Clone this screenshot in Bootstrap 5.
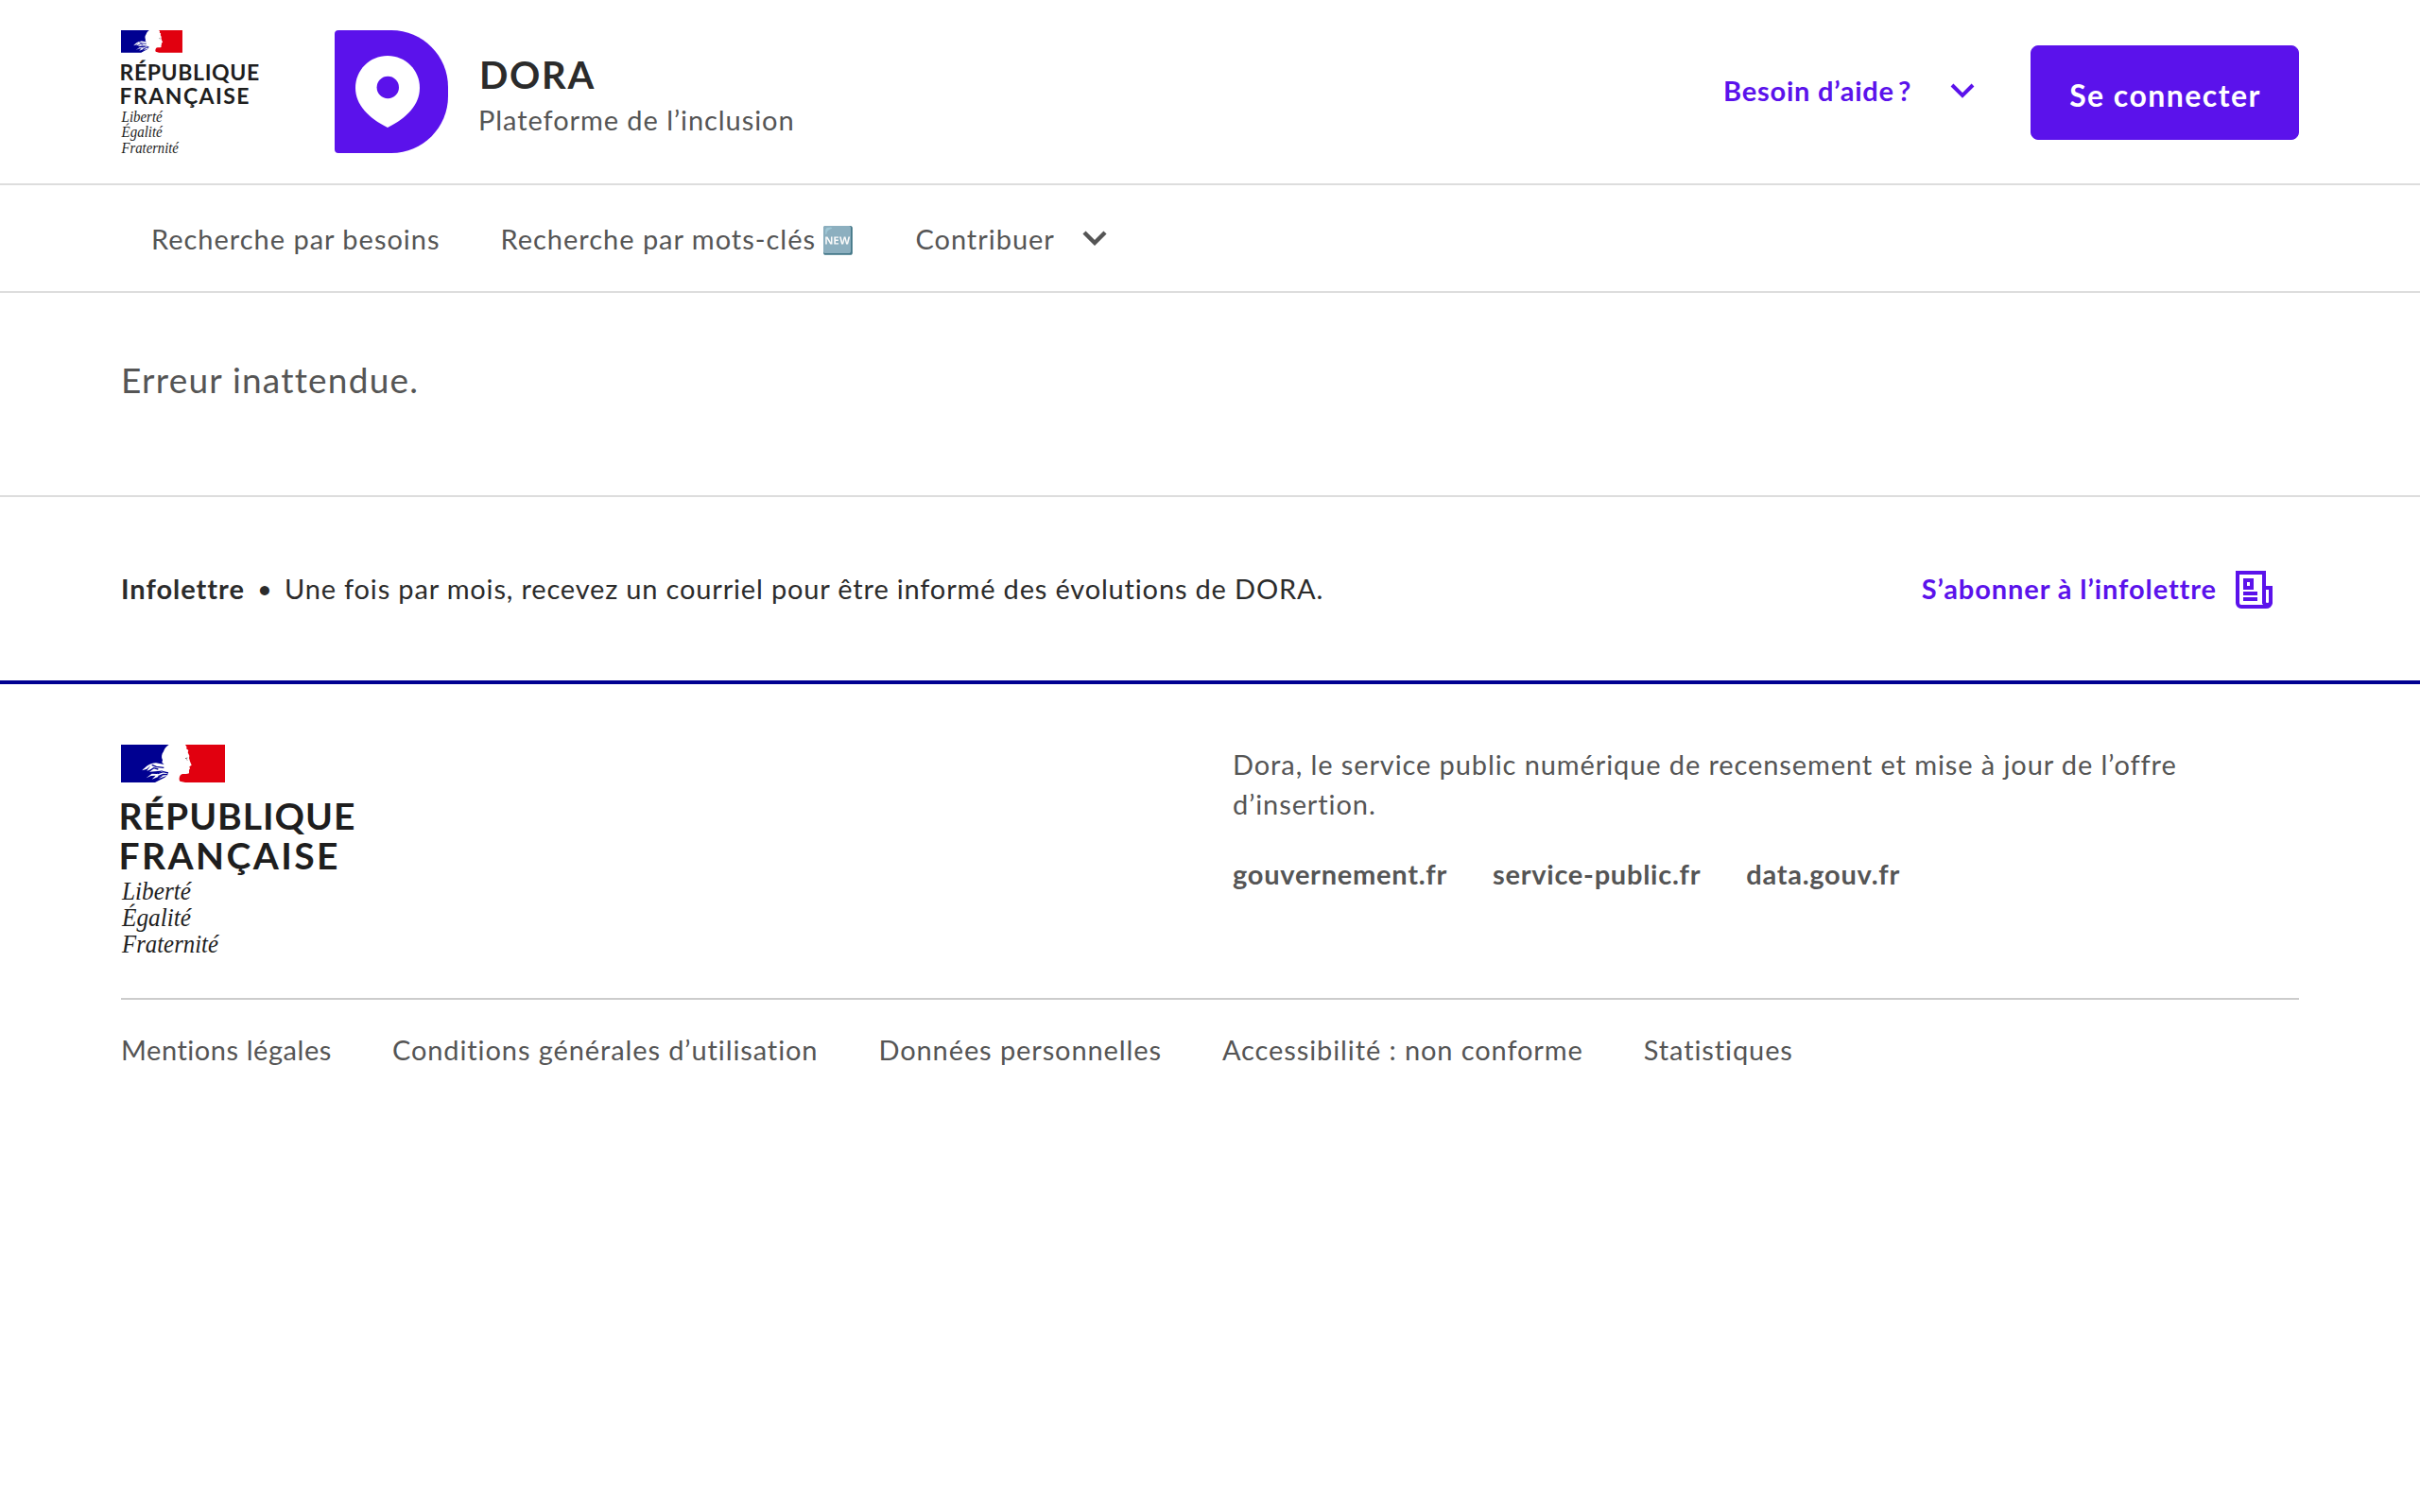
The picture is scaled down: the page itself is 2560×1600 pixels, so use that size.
<!DOCTYPE html>
<html lang="fr">
<head>
<meta charset="utf-8">
<meta name="viewport" content="width=device-width, initial-scale=1">
<title>DORA</title>
<link rel="stylesheet" href="https://cdn.jsdelivr.net/npm/bootstrap@5.3.0/dist/css/bootstrap.min.css">
<style>
:root { --dora: #5b12eb; --ink: #2b2b2b; --grey: #555; --rule: #ddd; --bleu: #000091; }
body { font-family: Lato, "Open Sans", sans-serif; font-size: 29px; line-height: 42px; color: var(--grey); letter-spacing: .93px; background: #fff; }
a { color: inherit; text-decoration: none; }
svg { display: block; flex: none; overflow: visible; }
symbol { overflow: visible; }
.wrap { padding-left: 128px; padding-right: 128px; }
.topbar { height: 196px; border-bottom: 2px solid var(--rule); }
.brand-text { margin-left: 32px; padding-top: 3px; }
.brand-name { font-size: 40px; line-height: 56px; letter-spacing: 1.7px; color: var(--ink); padding-left: 1px; }
.brand-sub { line-height: 40px; letter-spacing: .93px; }
.rf-small { margin-top: 7px; }
.dora-mark { margin-left: 72.4px; }
.help { color: var(--dora); letter-spacing: .78px; margin-bottom: 3px; }
.help svg { margin-left: 41px; margin-right: 59px; }
.login { --bs-btn-bg: var(--dora); --bs-btn-border-color: var(--dora); --bs-btn-color: #fff; width: 284px; height: 100px; border-radius: 8px; font-size: 32px; letter-spacing: 1.45px; padding: 5px 0 0 1px; margin-top: 2px; }
.mainnav { height: 114px; border-bottom: 2px solid var(--rule); padding-left: 160px; padding-top: 2px; gap: 64px; letter-spacing: .98px; }
.mainnav svg { margin-left: 29px; margin-top: -2px; }
.new-mark { font-size: 28px; margin-left: -2px; margin-right: -1px; }
.notice { height: 216px; padding-top: 65px; font-size: 37px; line-height: 54px; letter-spacing: 1.22px; border-bottom: 2px solid var(--rule); }
.newsletter { height: 194px; color: var(--ink); padding-right: 155px; letter-spacing: .83px; }
.newsletter strong { letter-spacing: .98px; }
.dot { width: 42px; text-align: center; letter-spacing: 0; font-size: 23px; }
.subscribe { color: var(--dora); gap: 20px; letter-spacing: .91px; }
.subscribe svg { margin-top: 2px; }
.sitefoot { border-top: 4px solid var(--bleu); padding-top: 64px; }
.foot-main { height: 270px; border-bottom: 2px solid #ccc; }
.foot-desc { width: 1128px; padding-right: 60px; letter-spacing: .9px; }
.foot-desc p { margin-bottom: 32px; }
.gov { gap: 48px; letter-spacing: .74px; }
.legal { gap: 64px; padding-top: 32px; letter-spacing: .9px; }
.legal a:first-child { letter-spacing: .55px; }
</style>
</head>
<body>
<svg width="0" height="0" class="position-absolute" aria-hidden="true">
  <symbol id="flag" viewBox="0 0 330 120">
    <path fill="#000091" d="M0 0H152C142 7 137 14 135 22C129 30 127 40 132 49L130 56L140 66L138 76L146 84L150 93L139 104L124 112L108 120H0Z"/>
    <path fill="#e1000f" d="M204 0L209 8L207 12L214 18L212 25L217 35L216 43L219 53L224 65L217 70L219 76L216 80L216 91C206 96 193 88 187 99C184 106 184 112 187 116L204 120H330V0Z"/>
    <path fill="#fff" d="M134 62L111 58C92 58 78 71 67 82L82 77L94 66L82 83L96 79L91 86L117 84L134 82L114 93L98 92L80 106L95 99L110 98L98 110L120 101L136 96L118 109L152 96V60Z"/>
    <path fill="none" stroke="#000091" stroke-width="4" d="M98 64L112 70L136 73M92 82L104 74L118 78M116 92L134 86L150 90M118 101L134 94L148 95"/>
    <path fill="none" stroke="#777" stroke-width="3" d="M204 44L211 42M208 47L211 49"/>
  </symbol>
</svg>

<header>
  <div class="topbar wrap d-flex align-items-center justify-content-between">
    <a href="#" class="d-flex align-items-center">
      <svg class="rf-small" width="153.6" height="137.1" viewBox="0 0 260 232">
        <use href="#flag" width="110" height="40"/>
        <g fill="#1e1e1e" font-weight="700" font-size="39" letter-spacing="0">
          <text x="-2.5" y="90" textLength="250">RÉPUBLIQUE</text>
          <text x="-2.5" y="132" textLength="232">FRANÇAISE</text>
        </g>
        <g fill="#1e1e1e" font-family="'Liberation Serif'" font-style="italic" font-size="27" letter-spacing="0">
          <text x="1" y="164" textLength="73" lengthAdjust="spacingAndGlyphs">Liberté</text>
          <text x="1" y="192" textLength="73" lengthAdjust="spacingAndGlyphs">Égalité</text>
          <text x="1" y="219.5" textLength="102" lengthAdjust="spacingAndGlyphs">Fraternité</text>
        </g>
      </svg>
      <svg class="dora-mark" width="120" height="130" viewBox="0 0 120 130">
        <path fill="#5b12eb" d="M4 0H60C93 0 120 27 120 60V70C120 103 93 130 60 130H4a4 4 0 0 1-4-4V4a4 4 0 0 1 4-4Z"/>
        <path fill="#fff" d="M56 27C37 27 22 42 22 61C22 79 36 93 56 103C76 93 90 79 90 61C90 42 75 27 56 27Z"/>
        <circle cx="56.3" cy="60.5" r="11.7" fill="#5b12eb"/>
      </svg>
      <span class="brand-text d-flex flex-column">
        <span class="brand-name fw-bold">DORA</span>
        <span class="brand-sub">Plateforme de l’inclusion</span>
      </span>
    </a>
    <div class="d-flex align-items-center">
      <a href="#" class="help fw-bold d-flex align-items-center"><span>Besoin d’aide<span class="ms-1">?</span></span>
        <svg width="26" height="16" viewBox="0 0 26 16"><path d="M2 2L13 13L24 2" fill="none" stroke="currentColor" stroke-width="4"/></svg>
      </a>
      <a href="#" class="login btn fw-bold d-flex align-items-center justify-content-center">Se connecter</a>
    </div>
  </div>
  <nav class="mainnav d-flex align-items-center text-nowrap">
    <a href="#">Recherche par besoins</a>
    <a href="#">Recherche par mots-clés <span class="new-mark">🆕</span></a>
    <a href="#" class="d-flex align-items-center">Contribuer
      <svg width="26" height="16" viewBox="0 0 26 16"><path d="M2 2L13 13L24 2" fill="none" stroke="currentColor" stroke-width="4.4"/></svg>
    </a>
  </nav>
</header>

<main>
  <div class="notice wrap">Erreur inattendue.</div>
  <section class="newsletter wrap d-flex align-items-center justify-content-between">
    <div class="d-flex"><strong>Infolettre</strong><span class="dot fw-bold">•</span><span>Une fois par mois, recevez un courriel pour être informé des évolutions de DORA.</span></div>
    <a href="#" class="subscribe fw-bold d-flex align-items-center">S’abonner à l’infolettre
      <svg width="40" height="40" viewBox="0 0 40 40" fill="none" stroke="currentColor" stroke-width="4">
        <path d="M32 38H6a4 4 0 0 1-4-4V2H30V34a4 4 0 0 0 7 0V18H30M32 38a5 4 0 0 0 5-4"/>
        <path d="M10 10H17V18H10ZM8 24H23M8 30H23"/>
      </svg>
    </a>
  </section>
</main>

<footer class="sitefoot wrap">
  <div class="foot-main d-flex justify-content-between align-items-start">
    <svg width="260" height="232" viewBox="0 0 260 232">
      <use href="#flag" width="110" height="40"/>
      <g fill="#1e1e1e" font-weight="700" font-size="39" letter-spacing="0">
        <text x="-2.5" y="90" textLength="250">RÉPUBLIQUE</text>
        <text x="-2.5" y="132" textLength="232">FRANÇAISE</text>
      </g>
      <g fill="#1e1e1e" font-family="'Liberation Serif'" font-style="italic" font-size="27" letter-spacing="0">
        <text x="1" y="164" textLength="73" lengthAdjust="spacingAndGlyphs">Liberté</text>
        <text x="1" y="192" textLength="73" lengthAdjust="spacingAndGlyphs">Égalité</text>
        <text x="1" y="219.5" textLength="102" lengthAdjust="spacingAndGlyphs">Fraternité</text>
      </g>
    </svg>
    <div class="foot-desc">
      <p>Dora, le service public numérique de recensement et mise à jour de l’offre d’insertion.</p>
      <div class="gov d-flex fw-bold"><a href="#">gouvernement.fr</a><a href="#">service-public.fr</a><a href="#">data.gouv.fr</a></div>
    </div>
  </div>
  <div class="legal d-flex">
    <a href="#">Mentions légales</a><a href="#">Conditions générales d’utilisation</a><a href="#">Données personnelles</a><a href="#">Accessibilité : non conforme</a><a href="#">Statistiques</a>
  </div>
</footer>
<script src="https://cdn.jsdelivr.net/npm/bootstrap@5.3.0/dist/js/bootstrap.bundle.min.js"></script>
</body>
</html>
